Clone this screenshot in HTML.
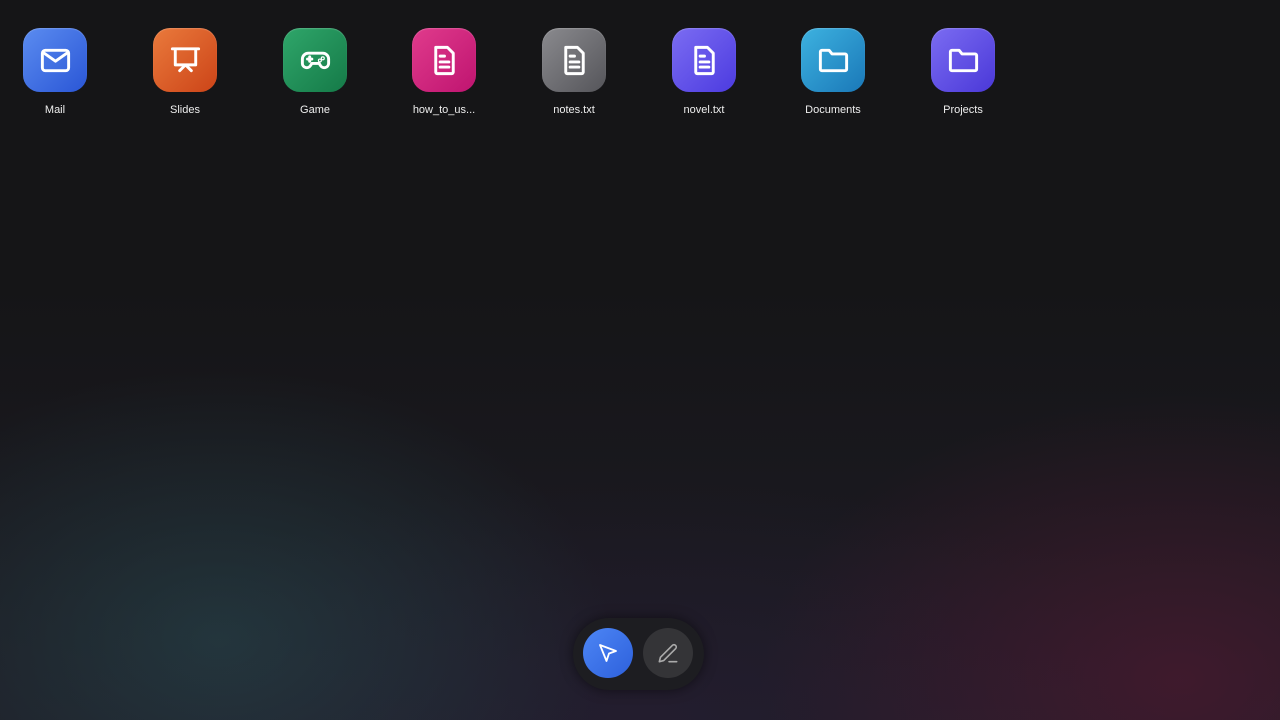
<!DOCTYPE html>
<html><head><meta charset="utf-8"><style>
html,body{margin:0;width:1280px;height:720px;overflow:hidden}
body{background:#151517;font-family:"Liberation Sans",sans-serif;position:relative}
.bg{position:absolute;inset:0;background:
radial-gradient(ellipse 520px 360px at 220px 640px,rgba(40,75,80,.55),transparent 75%),
radial-gradient(ellipse 560px 380px at 1180px 680px,rgba(85,25,50,.6),transparent 75%),
radial-gradient(ellipse 700px 300px at 640px 720px,rgba(40,30,55,.5),transparent 80%),
linear-gradient(#151517 0,#151517 40%,rgba(30,28,38,1) 100%)}
.it{position:absolute;top:28px;width:100px;text-align:center}
.ic{width:64px;height:64px;border-radius:17px;margin:0 auto;display:flex;align-items:center;justify-content:center;box-shadow:inset 0 1px 1px rgba(255,255,255,.2)}
.lb{color:#eee;font-size:11px;margin-top:12px}
.dock{position:absolute;left:573px;top:618px;width:131px;height:72px;border-radius:36px;background:#1d1d21;box-shadow:0 0 12px rgba(0,0,0,.5)}
.b{position:absolute;top:10px;width:50px;height:50px;border-radius:25px;display:flex;align-items:center;justify-content:center}
svg{fill:none;stroke:#fff;stroke-width:2;stroke-linecap:round;stroke-linejoin:round}
.ic svg{width:35px;height:35px}
</style></head><body><div class="bg"></div>
<div class="it" style="left:5px"><div class="ic" style="background:linear-gradient(135deg,#5b8cf0,#2a56d6)"><svg viewBox="0 0 24 24"><rect x="3" y="5" width="18" height="14" rx="2"/><path d="M3.5 6.5l8.5 6 8.5-6"/></svg></div><div class="lb">Mail</div></div>
<div class="it" style="left:135px"><div class="ic" style="background:linear-gradient(135deg,#ea7a3c,#cc4418)"><svg viewBox="0 0 24 24"><path d="M3 4h18M5 4v11h14V4M12 15l-4 4M12 15l4 4"/></svg></div><div class="lb">Slides</div></div>
<div class="it" style="left:265px"><div class="ic" style="background:linear-gradient(135deg,#2fa66a,#157a48)"><svg viewBox="0 0 24 24"><path d="M7 7h10a4 4 0 0 1 4 4v3a3 3 0 0 1-5.5 1.6L14.5 14h-5l-1 1.6A3 3 0 0 1 3 14v-3a4 4 0 0 1 4-4z"/><path d="M6.5 11h3M8 9.5v3"/><circle cx="15" cy="12" r=".4"/><circle cx="17" cy="10.5" r=".4"/></svg></div><div class="lb">Game</div></div>
<div class="it" style="left:394px"><div class="ic" style="background:linear-gradient(135deg,#e03b8c,#bf1470)"><svg viewBox="0 0 24 24"><path d="M6 3h8l4 4v13a1 1 0 0 1-1 1H7a1 1 0 0 1-1-1z"/><path d="M9 9h3M9 13h6M9 16.5h6"/></svg></div><div class="lb">how_to_us...</div></div>
<div class="it" style="left:524px"><div class="ic" style="background:linear-gradient(135deg,#8a8a8e,#55555a)"><svg viewBox="0 0 24 24"><path d="M6 3h8l4 4v13a1 1 0 0 1-1 1H7a1 1 0 0 1-1-1z"/><path d="M9 9h3M9 13h6M9 16.5h6"/></svg></div><div class="lb">notes.txt</div></div>
<div class="it" style="left:654px"><div class="ic" style="background:linear-gradient(135deg,#7b6cf2,#4c3be0)"><svg viewBox="0 0 24 24"><path d="M6 3h8l4 4v13a1 1 0 0 1-1 1H7a1 1 0 0 1-1-1z"/><path d="M9 9h3M9 13h6M9 16.5h6"/></svg></div><div class="lb">novel.txt</div></div>
<div class="it" style="left:783px"><div class="ic" style="background:linear-gradient(135deg,#3db2e0,#1a78b8)"><svg viewBox="0 0 24 24"><path d="M3 6a1 1 0 0 1 1-1h5l2 2.5h9a1 1 0 0 1 1 1V18a1 1 0 0 1-1 1H4a1 1 0 0 1-1-1z"/></svg></div><div class="lb">Documents</div></div>
<div class="it" style="left:913px"><div class="ic" style="background:linear-gradient(135deg,#7b6cf2,#4a38d8)"><svg viewBox="0 0 24 24"><path d="M3 6a1 1 0 0 1 1-1h5l2 2.5h9a1 1 0 0 1 1 1V18a1 1 0 0 1-1 1H4a1 1 0 0 1-1-1z"/></svg></div><div class="lb">Projects</div></div>
<div class="dock">
<div class="b" style="left:10px;background:linear-gradient(135deg,#4d86f5,#2d60dc)"><svg width="24" height="24" viewBox="0 0 24 24" style="stroke-width:1.8"><path d="M4 4l16 6-7 2.5L10.5 20z"/></svg></div>
<div class="b" style="left:70px;background:#343437"><svg width="26" height="26" viewBox="0 0 24 24" style="stroke:#aaa;stroke-width:1.5"><path d="M4 20l1-4L16 5a2 2 0 0 1 3 3L8 19z"/><path d="M13 20h7"/></svg></div>
</div>
</body></html>
